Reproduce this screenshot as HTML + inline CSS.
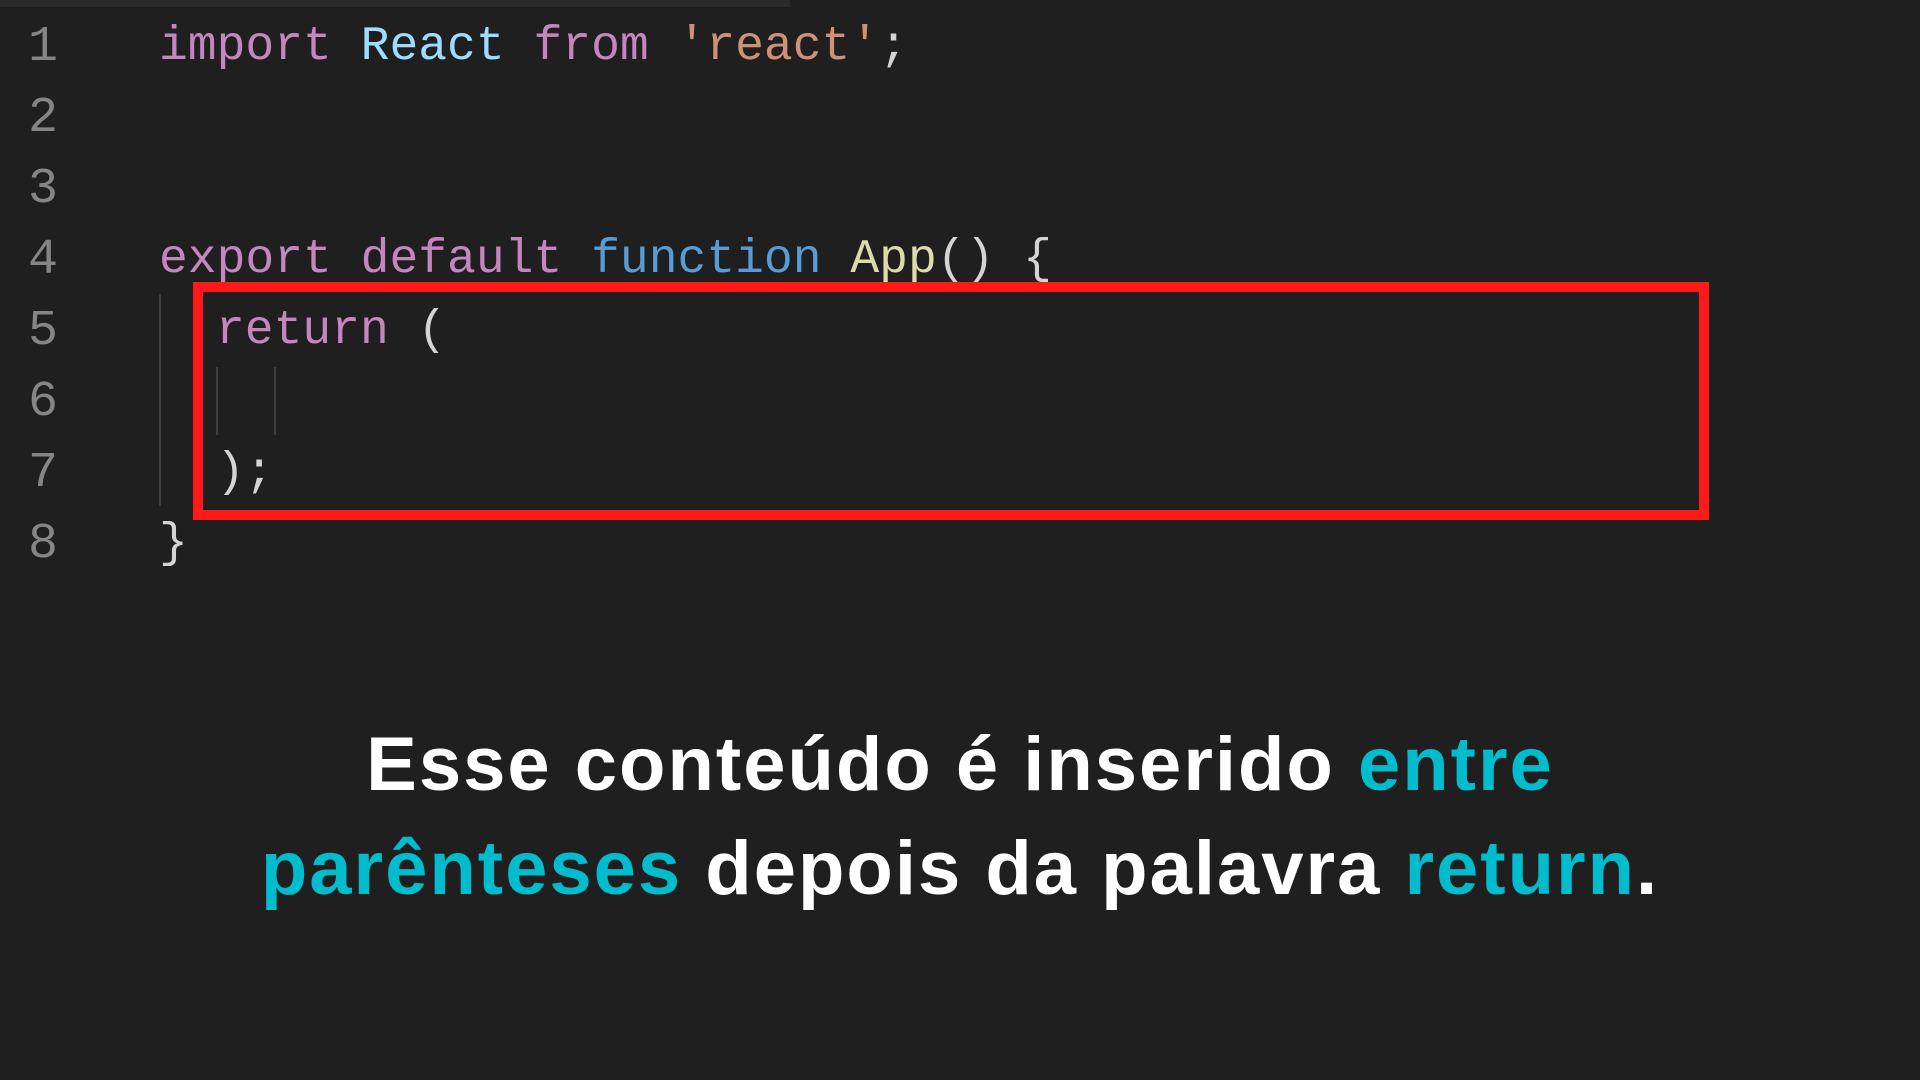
<!DOCTYPE html>
<html><head><meta charset="utf-8"><style>
html,body{margin:0;padding:0;width:1920px;height:1080px;background:#1f1f1f;overflow:hidden}
.top{position:absolute;left:0;top:0;width:790px;height:7px;background:#2b2b2b}
.code{font-family:"Liberation Mono",monospace;font-size:48px;position:absolute;white-space:pre;line-height:71px;height:71px}
.ln{color:#858585;left:28px;font-size:50px}
.k{color:#c586c0}.v{color:#9cdcfe}.s{color:#ce9178}.b{color:#569cd6}.f{color:#dcdcaa}.w{color:#d4d4d4}
.guide{position:absolute;width:2px;background:#404040}
.box{position:absolute;left:193px;top:282px;width:1496px;height:218px;border:10px solid #ff1a1a}
.cap{position:absolute;left:0;width:1920px;text-align:center;font-family:"Liberation Sans",sans-serif;font-weight:bold;font-size:76px;color:#fff;letter-spacing:2px}
.t{color:#00bccc}
</style></head><body>
<div class="top"></div>
<div class="code ln" style="top:12px">1</div>
<div class="code ln" style="top:83px">2</div>
<div class="code ln" style="top:154px">3</div>
<div class="code ln" style="top:225px">4</div>
<div class="code ln" style="top:296px">5</div>
<div class="code ln" style="top:367px">6</div>
<div class="code ln" style="top:438px">7</div>
<div class="code ln" style="top:509px">8</div>
<div class="code" style="left:159px;top:12px"><span class="k">import</span> <span class="v">React</span> <span class="k">from</span> <span class="s">'react'</span><span class="w">;</span></div>
<div class="code" style="left:159px;top:225px"><span class="k">export</span> <span class="k">default</span> <span class="b">function</span> <span class="f">App</span><span class="w">() {</span></div>
<div class="code" style="left:216px;top:296px"><span class="k">return</span> <span class="w">(</span></div>
<div class="code" style="left:216px;top:438px"><span class="w">);</span></div>
<div class="code" style="left:159px;top:509px"><span class="w">}</span></div>
<div class="guide" style="left:159px;top:294px;height:212px"></div>
<div class="guide" style="left:216px;top:367px;height:68px"></div>
<div class="guide" style="left:274px;top:367px;height:68px"></div>
<div class="box"></div>
<div class="cap" style="top:721px">Esse conteúdo é inserido <span class="t">entre</span></div>
<div class="cap" style="top:825px"><span class="t">parênteses</span> depois da palavra <span class="t">return</span>.</div>
</body></html>
